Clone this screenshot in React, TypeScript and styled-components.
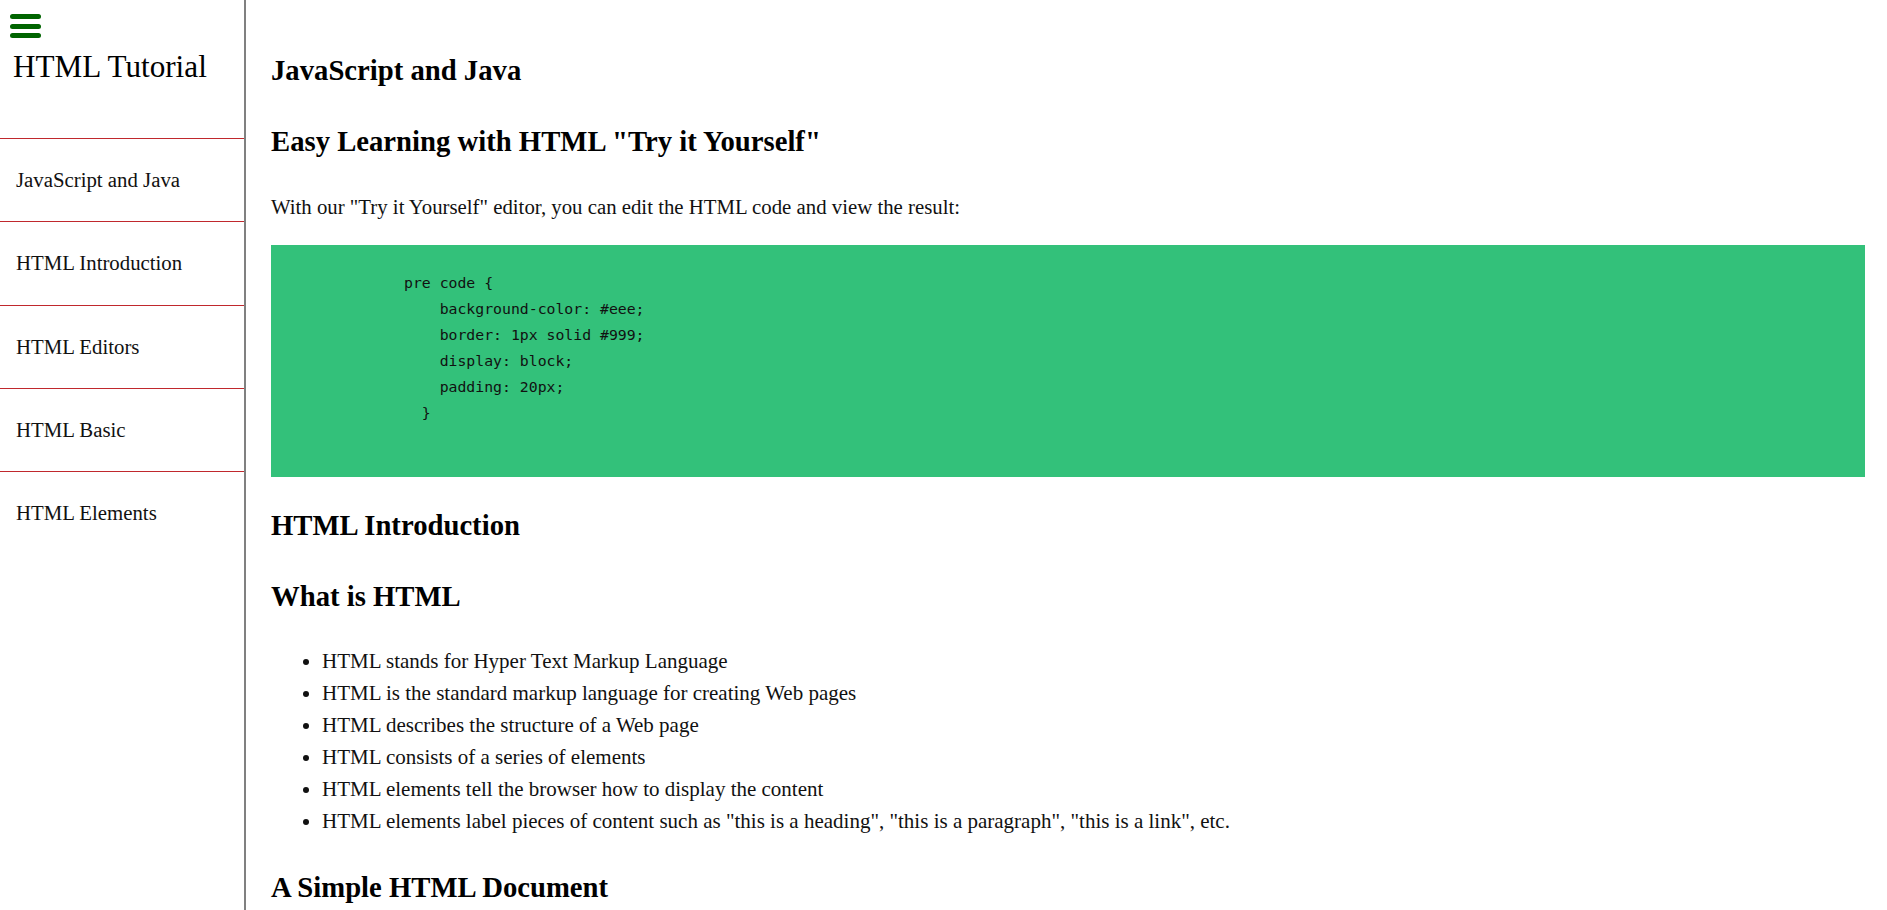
import React from "react";
import styled, { createGlobalStyle } from "styled-components";

const GlobalStyle = createGlobalStyle`
  html, body {
    margin: 0;
    padding: 0;
    background: #ffffff;
  }
  body {
    font-family: "Liberation Serif", "Times New Roman", serif;
    color: #111111;
  }
  * { box-sizing: border-box; }
`;

const Layout = styled.div`
  display: flex;
  height: 100vh;
  overflow: hidden;
`;

const Sidebar = styled.aside`
  flex: 0 0 246px;
  width: 246px;
  border-right: 2px solid #808080;
  display: flex;
  flex-direction: column;
`;

const MenuButton = styled.button`
  display: flex;
  flex-direction: column;
  gap: 4.5px;
  width: 31px;
  margin: 14px 0 0 10px;
  padding: 0;
  border: none;
  background: transparent;
  cursor: pointer;
`;

const MenuBar = styled.span`
  display: block;
  width: 31px;
  height: 5px;
  border-radius: 3px;
  background: #006400;
`;

const SideTitle = styled.h1`
  margin: 12px 0 0 13px;
  font-size: 31.2px;
  line-height: 34px;
  font-weight: normal;
  color: #000;
`;

const Nav = styled.nav`
  margin-top: 54px;
  display: flex;
  flex-direction: column;
`;

const NavItem = styled.a`
  display: block;
  border-top: 1px solid #c0282d;
  padding: 29px 16px;
  font-size: 20.8px;
  line-height: 24.25px;
  color: #111;
  text-decoration: none;
`;

const Main = styled.main`
  flex: 1;
  min-width: 0;
  padding: 53px 22px 0 25px;
  overflow: hidden;
`;

const Heading = styled.h2`
  margin: 37px 0 0;
  font-size: 28.7px;
  line-height: 34px;
  font-weight: bold;
  color: #000;
  &:first-child {
    margin-top: 0;
  }
`;

const Paragraph = styled.p`
  margin: 37px 0 0;
  font-size: 20.8px;
  line-height: 24px;
`;

const CodeBlock = styled.pre`
  margin: 26px 0 0;
  padding: 25px 20px 25px 133px;
  background: #33c17a;
  font-family: "DejaVu Sans Mono", "Liberation Mono", monospace;
  font-size: 14.8px;
  line-height: 26px;
  color: #111;
  & + ${Heading} {
    margin-top: 31px;
  }
`;

const BulletList = styled.ul`
  margin: 32px 0 0;
  padding-left: 51px;
  & + ${Heading} {
    margin-top: 33px;
  }
`;

const BulletItem = styled.li`
  font-size: 21px;
  line-height: 32px;
`;

const navItems = [
  "JavaScript and Java",
  "HTML Introduction",
  "HTML Editors",
  "HTML Basic",
  "HTML Elements",
];

const bullets = [
  "HTML stands for Hyper Text Markup Language",
  "HTML is the standard markup language for creating Web pages",
  "HTML describes the structure of a Web page",
  "HTML consists of a series of elements",
  "HTML elements tell the browser how to display the content",
  'HTML elements label pieces of content such as "this is a heading", "this is a paragraph", "this is a link", etc.',
];

const code = `pre code {
    background-color: #eee;
    border: 1px solid #999;
    display: block;
    padding: 20px;
  }
 `;

export default function App() {
  return (
    <>
      <GlobalStyle />
      <Layout>
        <Sidebar>
          <MenuButton aria-label="menu">
            <MenuBar />
            <MenuBar />
            <MenuBar />
          </MenuButton>
          <SideTitle>HTML Tutorial</SideTitle>
          <Nav>
            {navItems.map((n) => (
              <NavItem key={n} href="#">
                {n}
              </NavItem>
            ))}
          </Nav>
        </Sidebar>
        <Main>
          <Heading>JavaScript and Java</Heading>
          <Heading>Easy Learning with HTML "Try it Yourself"</Heading>
          <Paragraph>
            With our "Try it Yourself" editor, you can edit the HTML code and view the result:
          </Paragraph>
          <CodeBlock>{code}</CodeBlock>
          <Heading>HTML Introduction</Heading>
          <Heading>What is HTML</Heading>
          <BulletList>
            {bullets.map((b) => (
              <BulletItem key={b}>{b}</BulletItem>
            ))}
          </BulletList>
          <Heading>A Simple HTML Document</Heading>
        </Main>
      </Layout>
    </>
  );
}
